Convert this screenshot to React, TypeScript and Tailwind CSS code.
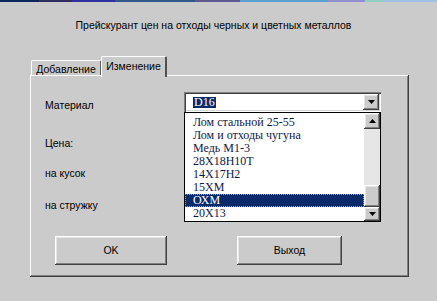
import React from "react";

const raised =
  "shadow-[inset_-1px_-1px_0_#404040,inset_1px_1px_0_#ffffff,inset_-2px_-2px_0_#808080,inset_2px_2px_0_#e4e4e4]";

function Arrow({ up }: { up?: boolean }) {
  return (
    <svg width="7" height="4" viewBox="0 0 7 4">
      {up ? <polygon points="3.5,0 7,4 0,4" fill="#000" /> : <polygon points="0,0 7,0 3.5,4" fill="#000" />}
    </svg>
  );
}

const items = [
  "Лом стальной 25-55",
  "Лом и отходы чугуна",
  "Медь М1-3",
  "28Х18Н10Т",
  "14Х17Н2",
  "15ХМ",
  "ОХМ",
  "20Х13",
];

const strip = [
  ["w-[39px]", "bg-[#0a2858]"],
  ["w-[33px]", "bg-[#302c60]"],
  ["w-[43px]", "bg-[#3030a0]"],
  ["w-[80px]", "bg-[#305888]"],
  ["w-[45px]", "bg-[#605890]"],
  ["w-[88px]", "bg-[#5aa0d0]"],
  ["w-[37px]", "bg-[#9090d0]"],
  ["w-[18px]", "bg-[#90d0c0]"],
  ["flex-1", "bg-[#a0c0e8]"],
];

export default function App() {
  return (
    <div className="w-[437px] h-[301px] bg-[#cbcbcb] overflow-hidden text-[10.5px] text-black font-['Liberation_Sans',Arial,sans-serif] flex flex-col">
      <div className="h-[2px] flex shrink-0">
        {strip.map(([w, c], i) => (
          <div key={i} className={`${w} ${c} h-full`} />
        ))}
      </div>
      <div className="mt-[16px] h-[14px] leading-[14px] text-center pr-[10px]">
        Прейскурант цен на отходы черных и цветных металлов
      </div>
      <div className="ml-[31px] mt-[24px] h-[19px] flex items-end relative z-10">
        <div className="w-[71px] h-[15px] leading-[14px] text-center border-t border-l border-white border-r-2 border-r-[#606060] rounded-tl-[2px] rounded-tr-[2px] pt-[1px]">
          Добавление
        </div>
        <div className="w-[66px] h-[21px] -mb-[2px] -ml-[1px] leading-[16px] text-center bg-[#cbcbcb] border-t border-l border-white border-r-2 border-r-[#505050] rounded-tl-[2px] rounded-tr-[2px] pt-[1px]">
          Изменение
        </div>
      </div>
      <div className="ml-[30px] w-[379px] h-[202px] relative flex flex-col pt-[17px] shadow-[inset_-1px_-1px_0_#404040,inset_1px_1px_0_#ffffff,inset_-2px_-2px_0_#808080]">
        <div className="flex h-[20px]">
          <div className="w-[154px] pl-[15px] pt-[6px] leading-[14px]">Материал</div>
          <div className="w-[197px] h-[20px] bg-white flex items-center shadow-[inset_1px_1px_0_#808080,inset_2px_2px_0_#404040,inset_-1px_-1px_0_#ffffff,inset_-2px_-2px_0_#d4d4d4] pl-[9px] pr-[2px]">
            <span className="bg-[#0a2a6a] text-white font-['Liberation_Serif',serif] text-[12px] leading-[11px] px-[1px]">
              D16
            </span>
            <div className="flex-1" />
            <div className={`w-[16px] h-[16px] bg-[#cbcbcb] flex items-center justify-center ${raised}`}>
              <Arrow />
            </div>
          </div>
        </div>
        <div className="mt-[24px] pl-[15px] h-[14px] leading-[14px]">Цена:</div>
        <div className="mt-[16px] pl-[15px] h-[14px] leading-[14px]">на кусок</div>
        <div className="mt-[18px] pl-[15px] h-[14px] leading-[14px]">на стружку</div>
        <div className="mt-[24px] flex pl-[25px]">
          <div className={`w-[112px] h-[29px] flex items-center justify-center ${raised}`}>OK</div>
          <div className={`ml-[70px] w-[105px] h-[29px] flex items-center justify-center ${raised}`}>Выход</div>
        </div>

        <div className="absolute left-[154px] top-[37px] w-[197px] h-[110px] bg-white border border-black flex">
          <div className="flex-1 pt-[3px] font-['Liberation_Serif',serif] text-[12px] text-[#101848]">
            {items.map((t, i) => (
              <div
                key={t}
                className={
                  i === 6
                    ? "h-[13px] leading-[13px] pl-[8px] bg-[#0a2a6a] text-white outline-1 outline-dotted outline-[#c8a040] -outline-offset-1"
                    : "h-[13px] leading-[13px] pl-[8px]"
                }
              >
                {t}
              </div>
            ))}
          </div>
          <div className="w-[16px] h-full flex flex-col bg-[#e6e6e6]">
            <div className={`h-[16px] bg-[#cbcbcb] flex items-center justify-center ${raised}`}>
              <Arrow up />
            </div>
            <div className="h-[56px]" />
            <div className={`h-[22px] bg-[#cbcbcb] ${raised}`} />
            <div className={`h-[14px] bg-[#cbcbcb] flex items-center justify-center ${raised}`}>
              <Arrow />
            </div>
          </div>
        </div>
      </div>
    </div>
  );
}
